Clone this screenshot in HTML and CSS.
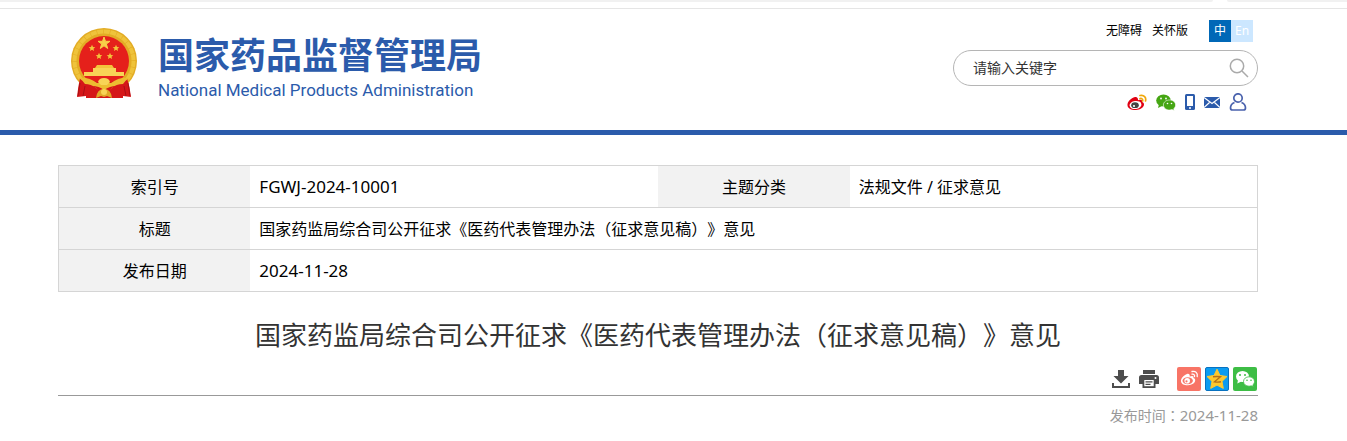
FILE: index.html
```html
<!DOCTYPE html>
<html lang="zh-CN">
<head>
<meta charset="utf-8">
<title>国家药品监督管理局</title>
<link rel="stylesheet" href="styles.css">
</head>
<body>
<div class="tabs"><span class="tab tab-main"></span><span class="tab tab-side"></span></div>
<header class="header">
  <div class="wrap header-row">
    <a class="brand" href="#">
      <svg class="emblem" viewBox="0 0 68 72" aria-hidden="true">
        <circle cx="34" cy="33" r="33" fill="#e3ac25"/>
        <circle cx="34" cy="33" r="29.500" fill="none" stroke="#efc33b" stroke-width="4" stroke-dasharray="6 .6"/>
        <circle cx="34" cy="33" r="25" fill="#e5201b"/>
        <path d="M34 9l1.500 4.300h4.500l-3.600 2.700 1.300 4.500-3.700-2.700-3.700 2.700 1.300-4.500-3.600-2.700h4.500z" fill="#f8cf48" stroke="#f8cf48"/>
        <g fill="#f3c43b">
          <path id="small-star" d="M22 16.800l1 2.200 2.300.2-1.800 1.500.6 2.300-2.100-1.300-2.100 1.300.6-2.300-1.800-1.500 2.300-.2z"/>
          <use href="#small-star" x="24"/>
          <use href="#small-star" x="7" y="8"/>
          <use href="#small-star" x="18" y="8"/>
          <path d="M27 37h15l2 3H25z"/>
          <path d="M23 40h23v4h8v4H14v-4h9z" fill="#f8d456"/>
        </g>
        <path d="M10 50q-2 9-3 19l9-1v2h37v-2l8 1q-1-10-4-19-11 1-23 7-12-6-24-7z" fill="#d51719"/>
        <path d="M10 55l-2 13M15 58l-2 10M54 58l2 10M58 55l2 13" stroke="#a90f14" fill="none"/>
        <path d="M9 50q10-1 18 5h14q8-6 18-5-3 2-6 6-7 0-11 4l-4 3h-8l-4-3q-5-4-11-4-3-4-6-6z" fill="#edbd31"/>
        <path d="M28 54q1-4 6-4t6 4l-3 3h-6z" fill="#f8d456"/>
        <path d="M22 58q7 0 12 4 6-4 12-4-4 1-7 5H29q-3-4-7-5z" fill="#d51719"/>
        <path d="M26 70q1-9 8-9t8 9l-5-2-3 1-3-1z" fill="#e0a928"/>
        <circle cx="34" cy="64" r="3" fill="#f8d456"/>
      </svg>
      <span class="brand-text"><span class="brand-cn">国家药品监督管理局</span><span class="brand-en">National Medical Products Administration</span></span>
    </a>
    <div class="tools">
      <nav class="top-links"><a href="#">无障碍</a><a href="#">关怀版</a><span class="lang"><a class="lang-cn" href="#">中</a><a class="lang-en" href="#">En</a></span></nav>
      <form class="search">
        <input class="search-input" type="text" aria-label="搜索" placeholder="请输入关键字">
        <button class="search-btn" type="button" aria-label="搜索"><svg width="20" height="20" viewBox="0 0 20 20" fill="none" stroke="#aaa" stroke-width="1.500"><circle cx="8" cy="8" r="6.700"/><path d="M13 13l6 6"/></svg></button>
      </form>
      <div class="social">
        <a href="#" aria-label="微博"><svg width="20" height="18" viewBox="0 0 20 18"><path d="M8 4C4 5 0 9 .5 12.500 1 16 5 17.200 9 17c4-.3 8-2.500 8-5.500 0-1.500-1-2-2-2.400.8-2-.5-3-4-1.800C11.300 5 10 3.600 8 4z" fill="#e00012"/><ellipse cx="8.500" cy="12" rx="6" ry="4" fill="#fff" transform="rotate(-8 8.500 12)"/><ellipse cx="8" cy="12.200" rx="3.800" ry="2.900" fill="#444"/><circle cx="7" cy="13" r="1.100" fill="#fff"/><path d="M13 2.500c4-1 6.500 2 5.500 5.500M13 5.500c2-.3 3 .8 2.600 2.500" fill="none" stroke="#f0a80c" stroke-width="1.700" stroke-linecap="round"/></svg></a>
        <a href="#" aria-label="微信"><svg width="20" height="18" viewBox="0 0 20 18"><g fill="#45a613"><ellipse cx="7.500" cy="7.500" rx="7.300" ry="6"/><path d="M3 11l-1 4 4-2z"/></g><path d="M19.600 12c0-3-2.800-5-6.100-5s-6.100 2-6.100 5 2.800 5 6.100 5c.9 0 1.700-.1 2.500-.4l2.200 1-.5-1.900c1.200-.9 1.900-2.200 1.900-3.700z" fill="#45a613" stroke="#fff" stroke-width=".6"/><g fill="#fff"><circle cx="5" cy="5.500" r=".9"/><circle cx="10" cy="5.500" r=".9"/><circle cx="11.500" cy="10.500" r=".8"/><circle cx="15.500" cy="10.500" r=".8"/></g></svg></a>
        <a href="#" aria-label="手机"><svg width="10" height="18" viewBox="0 0 10 18"><rect y="1" width="10" height="16" rx="1.500" fill="#2b5bab"/><path d="M2 3h6v10H2z" fill="#fff"/><circle cx="5" cy="15" r="1" fill="#fff"/></svg></a>
        <a href="#" aria-label="邮箱"><svg width="16" height="18" viewBox="0 0 16 18"><path d="M0 4h16v11H0z" fill="#2b5bab"/><path d="M0 4.500l8 6 8-6M0 14.500l5.500-5M16 14.500l-5.500-5" fill="none" stroke="#fff" stroke-width="1.200"/></svg></a>
        <a href="#" aria-label="个人中心"><svg width="18" height="18" viewBox="0 0 18 18" fill="none" stroke="#4a62ad" stroke-width="1.700"><circle cx="9" cy="5" r="4.200"/><path d="M5.500 9.500C3 10.500 1.500 12 1.500 15c0 1.500.7 2 2 2h11c1.300 0 2-.5 2-2 0-3-1.500-4.500-4-5.500"/></svg></a>
      </div>
    </div>
  </div>
</header>
<main class="wrap">
  <table class="info">
    <tr><th scope="row">索引号</th><td class="short number">FGWJ-2024-10001</td><th scope="row">主题分类</th><td>法规文件 / 征求意见</td></tr>
    <tr><th scope="row">标题</th><td colspan="3">国家药监局综合司公开征求《医药代表管理办法（征求意见稿）》意见</td></tr>
    <tr><th scope="row">发布日期</th><td class="number" colspan="3">2024-11-28</td></tr>
  </table>
  <h1 class="title">国家药监局综合司公开征求《医药代表管理办法（征求意见稿）》意见</h1>
  <div class="actions">
    <button type="button" aria-label="下载"><svg width="18" height="18" viewBox="0 0 18 18" fill="#4d4d4d"><path d="M6 0h6v6h4.500L9 13.500 1.500 6H6zM0 13h2v3h14v-3h2v5H0z"/></svg></button>
    <button type="button" aria-label="打印"><svg width="20" height="18" viewBox="0 0 20 18"><path d="M4 0h12v4H4zM2.500 5h15Q20 5 20 7.500V14h-3.500v4h-13v-4H0V7.500Q0 5 2.500 5z" fill="#4d4d4d"/><path d="M5.300 10h9.400v6.200H5.300z" fill="#fff"/><path d="M6.500 11.200h7v1.200h-7zM6.500 13.800h5V15h-5z" fill="#4d4d4d"/><circle cx="16.500" cy="8" r="1" fill="#fff"/></svg></button>
    <span class="share">
      <button type="button" aria-label="分享到微博"><svg width="24" height="24" viewBox="0 0 24 24"><rect width="24" height="24" rx="2" fill="#f87466"/><path d="M10 7c-3 1-6.500 4.500-6 7.500.5 3 4 4 7 3.800 4-.3 7.200-2.300 7.200-5 0-1.300-.7-1.900-1.800-2.200.6-1.900-.8-2.600-3.700-1.500C13 7.400 12 6.500 10 7z" fill="#fff"/><ellipse cx="10.700" cy="13.700" rx="5.200" ry="3.500" fill="#f87466"/><circle cx="10.200" cy="13.700" r="2.800" fill="#fff"/><circle cx="9.500" cy="14.300" r="1.100" fill="#f87466"/><path d="M15 4.500c3.500-.8 6 1.500 5.200 5M15 7.200c1.800-.3 2.800.7 2.500 2.300" fill="none" stroke="#fff" stroke-width="1.300" stroke-linecap="round"/></svg></button>
      <button type="button" aria-label="分享到QQ空间"><svg width="24" height="24" viewBox="0 0 24 24"><rect x=".5" y=".5" width="23" height="23" rx="1.500" fill="#0c9bf0" stroke="#0872c0"/><path d="M12 2.200l3 6.300 7 1-5 4.900 1.300 7-6.300-3.300-6.300 3.300 1.300-7-5-4.900 7-1z" fill="#fec82e" stroke="#fec82e" stroke-linejoin="round"/><path d="M8 9.800q4-.6 7.500 0l-6 5q3 .6 6.500 0" fill="none" stroke="#b57018" stroke-width="1.400"/></svg></button>
      <button type="button" aria-label="分享到微信"><svg width="24" height="24" viewBox="0 0 24 24"><rect width="24" height="24" rx="2" fill="#3dbd45"/><g fill="#fff"><ellipse cx="9.500" cy="9.500" rx="6.500" ry="5.500"/><path d="M5 13l-.7 3.500 4-2z"/></g><path d="M21.500 14.500c0-2.800-2.500-4.700-5.500-4.700s-5.500 1.900-5.500 4.700 2.500 4.700 5.500 4.700c.8 0 1.500-.1 2.200-.4l2.200 1.200-.6-2.100c1-.8 1.700-2 1.700-3.400z" fill="#fff" stroke="#3dbd45" stroke-width=".8"/><g fill="#3dbd45"><circle cx="7" cy="8" r="1"/><circle cx="12" cy="8" r="1"/><circle cx="14" cy="13.200" r=".8"/><circle cx="18" cy="13.200" r=".8"/></g></svg></button>
    </span>
  </div>
  <p class="date">发布时间<span class="colon" lang="zh-TW">：</span><time datetime="2024-11-28">2024-11-28</time></p>
</main>
</body>
</html>
```
FILE: styles.css
```css
* { box-sizing: border-box; }
body {
  margin: 0;
  background: #fff;
  color: #000;
  font: 16px/24px "Noto Sans", "Noto Sans CJK SC", sans-serif;
  text-spacing-trim: space-all;
}
a { color: inherit; text-decoration: none; }
button { padding: 0; border: 0; background: none; cursor: pointer; }
svg { display: block; }
.tabs {
  display: flex;
  gap: 14px;
  height: 9px;
  border-bottom: 1px solid #e5e5e5;
}
.tab { height: 2px; background: #f1f1f1; }
.tab-main { flex: 1; border-bottom-right-radius: 2px; }
.tab-side { width: 120px; border-bottom-left-radius: 2px; }
.wrap { padding: 0 89px 0 58px; }
.header { border-bottom: 5px solid #2b5bab; }
.header-row {
  display: flex;
  justify-content: space-between;
  align-items: flex-start;
  padding-top: 11px;
  padding-bottom: 19px;
}
.brand {
  display: flex;
  gap: 20px;
  padding: 8px 0 0 12px;
  color: #2b5bab;
}
.emblem { width: 68px; height: 72px; }
.brand-text { display: flex; flex-direction: column; padding-top: 8px; }
.brand-cn { font-size: 36px; line-height: 40px; font-weight: 700; }
.brand-en { font-family: Roboto, sans-serif; font-size: 17px; line-height: 28px; }
.tools { display: flex; flex-direction: column; width: 305px; }
.top-links {
  display: flex;
  justify-content: flex-end;
  align-items: center;
  gap: 10px;
  padding-right: 5px;
  font-size: 12px;
  line-height: 22px;
}
.lang { display: flex; margin-left: 11px; color: #fff; text-align: center; }
.lang a { width: 22px; }
.lang-cn { background: #0068b7; }
.lang-en { background: #cce7ff; }
.search {
  display: flex;
  align-items: center;
  height: 36px;
  margin-top: 8px;
  padding: 0 8px 0 19px;
  border: 1px solid #b5b5b5;
  border-radius: 18px;
}
.search-input {
  flex: 1;
  min-width: 0;
  padding: 0;
  border: 0;
  outline: 0;
  background: none;
  font: inherit;
  font-size: 14px;
}
.search-input::placeholder { color: #333; opacity: 1; }
.social {
  display: flex;
  justify-content: flex-end;
  gap: 9px;
  padding: 7px 11px 0 0;
}
.info {
  width: 100%;
  margin-top: 30px;
  border: 1px solid #d5d5d5;
  border-collapse: collapse;
  table-layout: fixed;
}
.info tr { border-bottom: 1px solid #d5d5d5; }
.info th, .info td { height: 42px; padding: 0 9px; }
.info th { width: 16%; background: #f2f2f2; font-weight: 400; }
.info .short { width: 34%; }
.info .number { font-size: 17px; }
.title {
  margin: 23px 0 0;
  color: #333;
  font-size: 26px;
  line-height: 40px;
  font-weight: 400;
  text-align: center;
}
.actions {
  display: flex;
  justify-content: flex-end;
  align-items: center;
  gap: 9px;
  padding: 12px 1px 4px 0;
  border-bottom: 1px solid #999;
}
.share { display: flex; gap: 4px; margin-left: 9px; }
.date {
  margin: 7px 0 0;
  color: #999;
  font-size: 14px;
  text-align: right;
}
.date .colon { font-family: "Noto Sans CJK TC", sans-serif; }
.date time { font-size: 15px; }
```
